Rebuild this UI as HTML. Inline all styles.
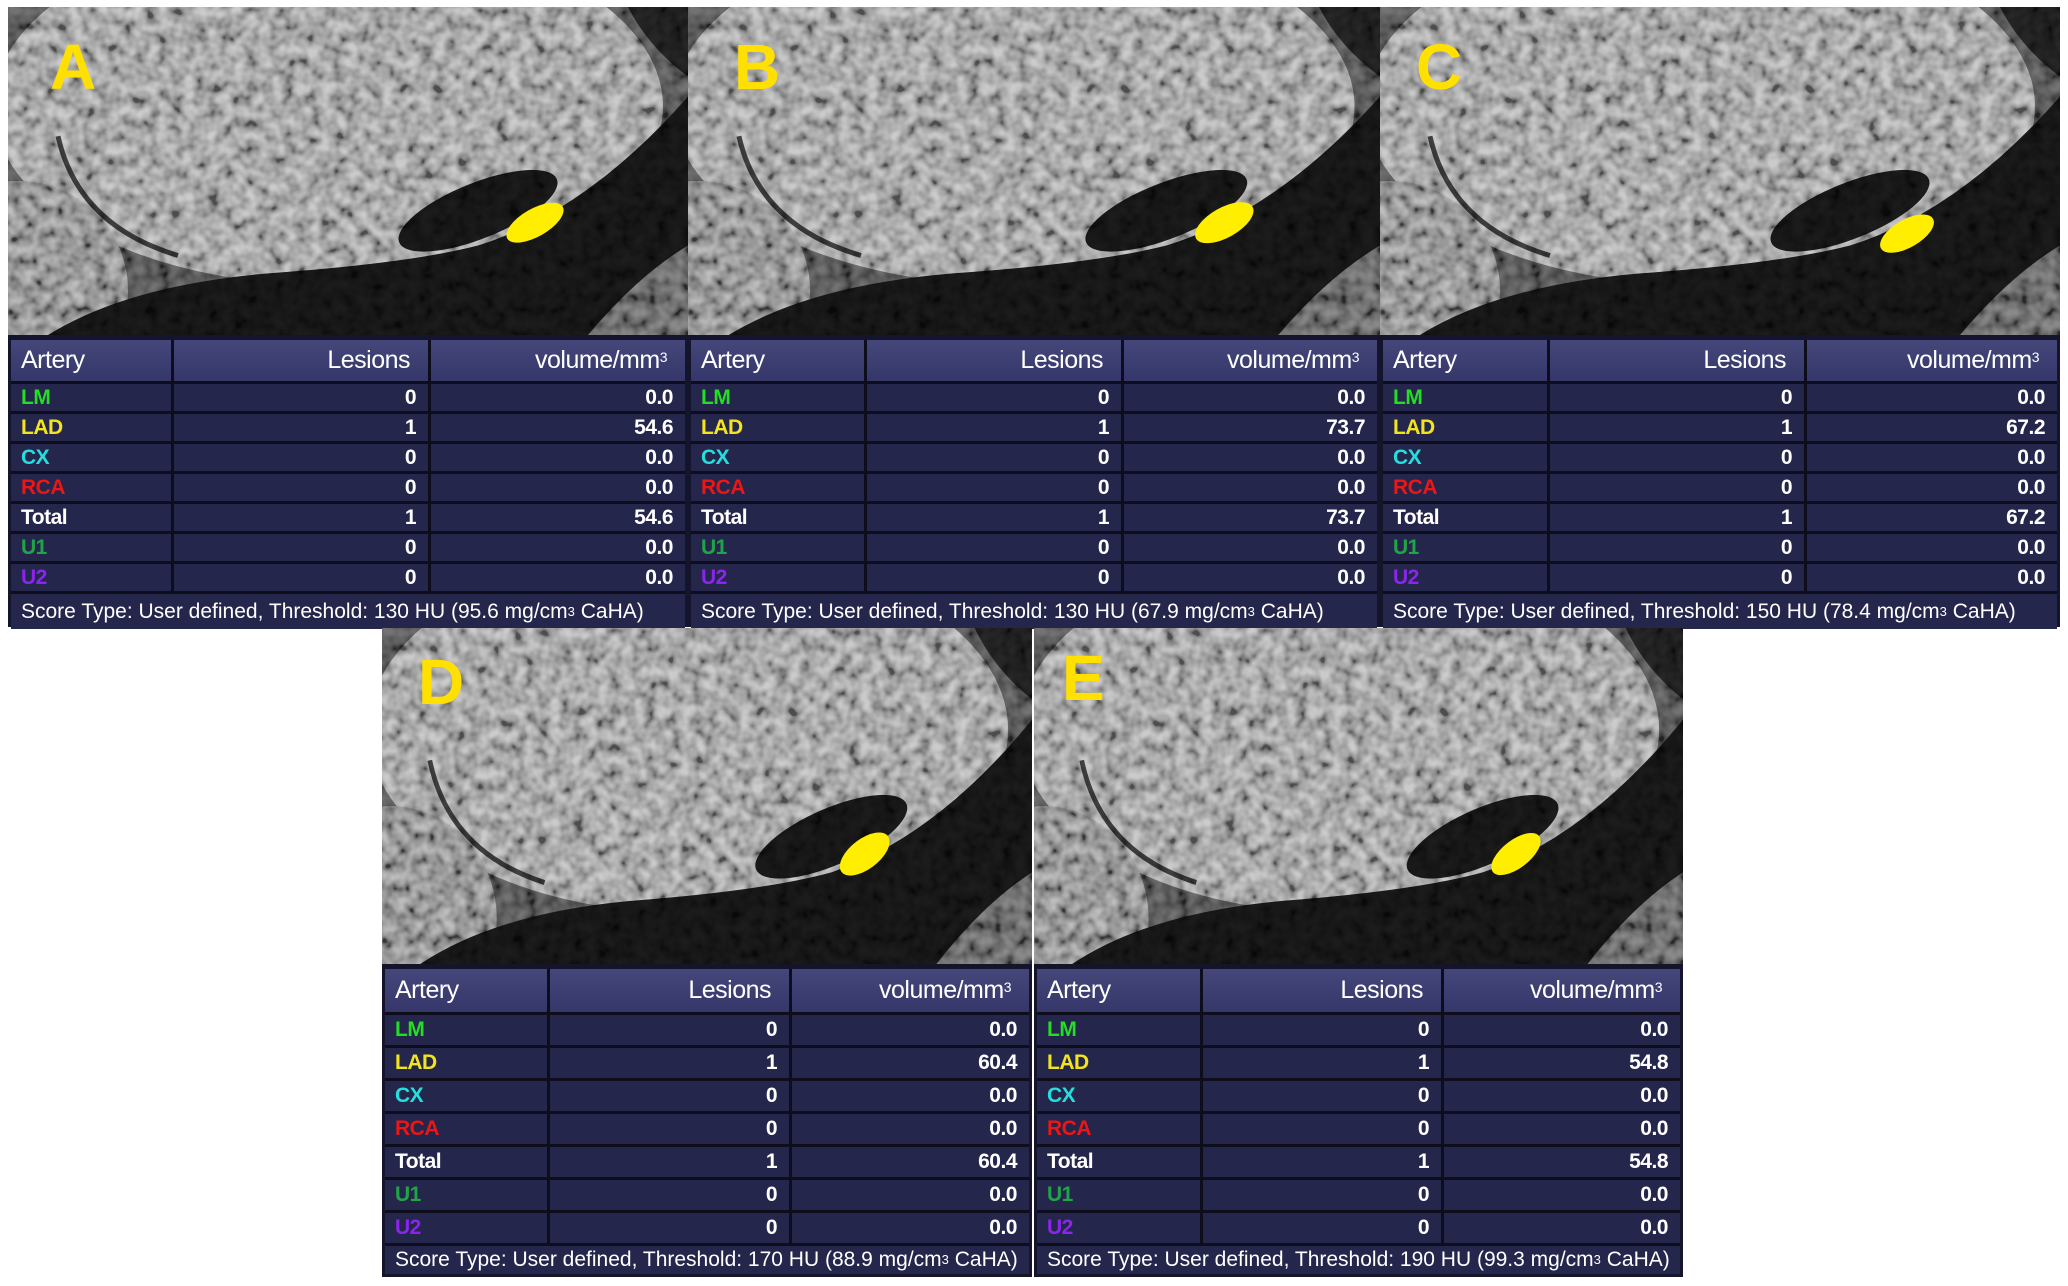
<!DOCTYPE html>
<html><head><meta charset="utf-8">
<style>
*{margin:0;padding:0;box-sizing:border-box}
body{width:2068px;height:1286px;background:#fff;position:relative;overflow:hidden;font-family:"Liberation Sans",Arial,sans-serif}
.p{position:absolute}
.img{position:absolute;left:0;top:0;overflow:hidden;background:#000}
.img svg{display:block;width:100%;height:100%}
.lab{position:absolute;color:#ffe000;font-weight:bold;font-size:64px;line-height:1}
.tb{position:absolute;left:0;background:#14152c;border:3px solid #14152c;border-top-width:5px}
.r{display:flex}
.c{background:#25264b;border-right:3px solid #0d0d1c;border-bottom:3px solid #0d0d1c;color:#fff;font-size:21px;font-weight:bold;display:flex;align-items:center;justify-content:flex-end;padding-right:12px;letter-spacing:-0.5px}
.c:first-child{justify-content:flex-start;padding-left:10px;padding-right:0}
.c:last-child{border-right:none}
.h .c{background:linear-gradient(#45477a,#35376a);font-weight:normal;font-size:25px;padding-right:18px}
.h .c:first-child{padding-left:10px}
.h sup{font-size:14px;position:relative;top:-4px}
.f{background:#25264b;color:#fff;font-size:21px;display:flex;align-items:center;padding-left:10px;white-space:pre}
.f sup{font-size:13px;vertical-align:8px;line-height:0}
.lm{color:#25dd25!important}.lad{color:#f2e41e!important}.cx{color:#25dede!important}.rca{color:#ee1515!important}.u1{color:#1fa548!important}.u2{color:#8a25ee!important}
</style></head><body>
<svg width="0" height="0" style="position:absolute">
<defs>
<filter id="nz" x="0" y="0" width="100%" height="100%">
<feTurbulence type="fractalNoise" baseFrequency="0.08" numOctaves="2" seed="5"/>
<feColorMatrix type="matrix" values="1.8 0 0 0 -0.4  1.8 0 0 0 -0.4  1.8 0 0 0 -0.4  0 0 0 0 0.55"/>
</filter>
<g id="scene">
<rect width="680" height="330" fill="#4a4a4a"/>
<ellipse cx="320" cy="100" rx="335" ry="180" fill="#8c8c8c"/>
<ellipse cx="10" cy="285" rx="110" ry="110" fill="#7a7a7a"/>
<path d="M40,330 Q120,280 260,268 Q400,258 470,240 Q580,205 680,90 L680,330Z" fill="#121212"/>
<ellipse cx="470" cy="205" rx="85" ry="28" transform="rotate(-22 470 205)" fill="#121212"/>
<path d="M580,330 Q630,270 680,240 L680,330Z" fill="#5a5a5a"/>
<path d="M50,130 Q70,220 170,250" fill="none" stroke="#2a2a2a" stroke-width="5"/>
<path d="M620,0 L680,0 L680,70 Q640,40 620,0Z" fill="#1a1a1a"/>
<rect width="680" height="330" filter="url(#nz)" style="mix-blend-mode:overlay"/>
</g>
</defs></svg>

<!-- A -->
<div class="p" style="left:8px;top:7px;width:680px;height:620px">
 <div class="img" style="width:680px;height:328px"><svg viewBox="0 0 680 330" preserveAspectRatio="none"><use href="#scene"/><ellipse cx="527" cy="217" rx="32" ry="14" transform="rotate(-30 527 217)" fill="#ffee00"/></svg></div>
 <div class="lab" style="left:42px;top:28px">A</div>
 <div class="tb" style="top:328px;width:680px;height:292px">
  <div class="r h" style="height:44px"><div class="c" style="width:163px">Artery</div><div class="c" style="width:257px">Lesions</div><div class="c" style="flex:1">volume/mm<sup>3</sup></div></div>
  <div class="r" style="height:30px"><div class="c lm" style="width:163px">LM</div><div class="c" style="width:257px">0</div><div class="c" style="flex:1">0.0</div></div>
  <div class="r" style="height:30px"><div class="c lad" style="width:163px">LAD</div><div class="c" style="width:257px">1</div><div class="c" style="flex:1">54.6</div></div>
  <div class="r" style="height:30px"><div class="c cx" style="width:163px">CX</div><div class="c" style="width:257px">0</div><div class="c" style="flex:1">0.0</div></div>
  <div class="r" style="height:30px"><div class="c rca" style="width:163px">RCA</div><div class="c" style="width:257px">0</div><div class="c" style="flex:1">0.0</div></div>
  <div class="r" style="height:30px"><div class="c" style="width:163px">Total</div><div class="c" style="width:257px">1</div><div class="c" style="flex:1">54.6</div></div>
  <div class="r" style="height:30px"><div class="c u1" style="width:163px">U1</div><div class="c" style="width:257px">0</div><div class="c" style="flex:1">0.0</div></div>
  <div class="r" style="height:30px"><div class="c u2" style="width:163px">U2</div><div class="c" style="width:257px">0</div><div class="c" style="flex:1">0.0</div></div>
  <div class="f" style="height:35px">Score Type: User defined, Threshold: 130 HU (95.6 mg/cm<sup>3</sup> CaHA)</div>
 </div>
</div>

<!-- B -->
<div class="p" style="left:688px;top:7px;width:692px;height:620px">
 <div class="img" style="width:692px;height:328px"><svg viewBox="0 0 680 330" preserveAspectRatio="none"><use href="#scene"/><ellipse cx="527" cy="217" rx="32" ry="15" transform="rotate(-30 527 217)" fill="#ffee00"/></svg></div>
 <div class="lab" style="left:46px;top:28px">B</div>
 <div class="tb" style="top:328px;width:692px;height:292px">
  <div class="r h" style="height:44px"><div class="c" style="width:176px">Artery</div><div class="c" style="width:257px">Lesions</div><div class="c" style="flex:1">volume/mm<sup>3</sup></div></div>
  <div class="r" style="height:30px"><div class="c lm" style="width:176px">LM</div><div class="c" style="width:257px">0</div><div class="c" style="flex:1">0.0</div></div>
  <div class="r" style="height:30px"><div class="c lad" style="width:176px">LAD</div><div class="c" style="width:257px">1</div><div class="c" style="flex:1">73.7</div></div>
  <div class="r" style="height:30px"><div class="c cx" style="width:176px">CX</div><div class="c" style="width:257px">0</div><div class="c" style="flex:1">0.0</div></div>
  <div class="r" style="height:30px"><div class="c rca" style="width:176px">RCA</div><div class="c" style="width:257px">0</div><div class="c" style="flex:1">0.0</div></div>
  <div class="r" style="height:30px"><div class="c" style="width:176px">Total</div><div class="c" style="width:257px">1</div><div class="c" style="flex:1">73.7</div></div>
  <div class="r" style="height:30px"><div class="c u1" style="width:176px">U1</div><div class="c" style="width:257px">0</div><div class="c" style="flex:1">0.0</div></div>
  <div class="r" style="height:30px"><div class="c u2" style="width:176px">U2</div><div class="c" style="width:257px">0</div><div class="c" style="flex:1">0.0</div></div>
  <div class="f" style="height:35px">Score Type: User defined, Threshold: 130 HU (67.9 mg/cm<sup>3</sup> CaHA)</div>
 </div>
</div>

<!-- C -->
<div class="p" style="left:1380px;top:7px;width:680px;height:620px">
 <div class="img" style="width:680px;height:328px"><svg viewBox="0 0 680 330" preserveAspectRatio="none"><use href="#scene"/><ellipse cx="527" cy="228" rx="30" ry="14" transform="rotate(-30 527 228)" fill="#ffee00"/></svg></div>
 <div class="lab" style="left:36px;top:28px">C</div>
 <div class="tb" style="top:328px;width:680px;height:292px">
  <div class="r h" style="height:44px"><div class="c" style="width:167px">Artery</div><div class="c" style="width:257px">Lesions</div><div class="c" style="flex:1">volume/mm<sup>3</sup></div></div>
  <div class="r" style="height:30px"><div class="c lm" style="width:167px">LM</div><div class="c" style="width:257px">0</div><div class="c" style="flex:1">0.0</div></div>
  <div class="r" style="height:30px"><div class="c lad" style="width:167px">LAD</div><div class="c" style="width:257px">1</div><div class="c" style="flex:1">67.2</div></div>
  <div class="r" style="height:30px"><div class="c cx" style="width:167px">CX</div><div class="c" style="width:257px">0</div><div class="c" style="flex:1">0.0</div></div>
  <div class="r" style="height:30px"><div class="c rca" style="width:167px">RCA</div><div class="c" style="width:257px">0</div><div class="c" style="flex:1">0.0</div></div>
  <div class="r" style="height:30px"><div class="c" style="width:167px">Total</div><div class="c" style="width:257px">1</div><div class="c" style="flex:1">67.2</div></div>
  <div class="r" style="height:30px"><div class="c u1" style="width:167px">U1</div><div class="c" style="width:257px">0</div><div class="c" style="flex:1">0.0</div></div>
  <div class="r" style="height:30px"><div class="c u2" style="width:167px">U2</div><div class="c" style="width:257px">0</div><div class="c" style="flex:1">0.0</div></div>
  <div class="f" style="height:35px">Score Type: User defined, Threshold: 150 HU (78.4 mg/cm<sup>3</sup> CaHA)</div>
 </div>
</div>

<!-- D -->
<div class="p" style="left:382px;top:628px;width:650px;height:649px">
 <div class="img" style="width:650px;height:336px"><svg viewBox="0 0 680 330" preserveAspectRatio="none"><use href="#scene"/><ellipse cx="505" cy="222" rx="30" ry="15" transform="rotate(-35 505 222)" fill="#ffee00"/></svg></div>
 <div class="lab" style="left:36px;top:22px">D</div>
 <div class="tb" style="top:336px;width:650px;height:313px">
  <div class="r h" style="height:46px"><div class="c" style="width:165px">Artery</div><div class="c" style="width:242px">Lesions</div><div class="c" style="flex:1">volume/mm<sup>3</sup></div></div>
  <div class="r" style="height:33px"><div class="c lm" style="width:165px">LM</div><div class="c" style="width:242px">0</div><div class="c" style="flex:1">0.0</div></div>
  <div class="r" style="height:33px"><div class="c lad" style="width:165px">LAD</div><div class="c" style="width:242px">1</div><div class="c" style="flex:1">60.4</div></div>
  <div class="r" style="height:33px"><div class="c cx" style="width:165px">CX</div><div class="c" style="width:242px">0</div><div class="c" style="flex:1">0.0</div></div>
  <div class="r" style="height:33px"><div class="c rca" style="width:165px">RCA</div><div class="c" style="width:242px">0</div><div class="c" style="flex:1">0.0</div></div>
  <div class="r" style="height:33px"><div class="c" style="width:165px">Total</div><div class="c" style="width:242px">1</div><div class="c" style="flex:1">60.4</div></div>
  <div class="r" style="height:33px"><div class="c u1" style="width:165px">U1</div><div class="c" style="width:242px">0</div><div class="c" style="flex:1">0.0</div></div>
  <div class="r" style="height:33px"><div class="c u2" style="width:165px">U2</div><div class="c" style="width:242px">0</div><div class="c" style="flex:1">0.0</div></div>
  <div class="f" style="height:28px">Score Type: User defined, Threshold: 170 HU (88.9 mg/cm<sup>3</sup> CaHA)</div>
 </div>
</div>

<!-- E -->
<div class="p" style="left:1034px;top:628px;width:649px;height:649px">
 <div class="img" style="width:649px;height:336px"><svg viewBox="0 0 680 330" preserveAspectRatio="none"><use href="#scene"/><ellipse cx="505" cy="222" rx="30" ry="14" transform="rotate(-35 505 222)" fill="#ffee00"/></svg></div>
 <div class="lab" style="left:28px;top:18px">E</div>
 <div class="tb" style="top:336px;width:649px;height:313px">
  <div class="r h" style="height:46px"><div class="c" style="width:166px">Artery</div><div class="c" style="width:241px">Lesions</div><div class="c" style="flex:1">volume/mm<sup>3</sup></div></div>
  <div class="r" style="height:33px"><div class="c lm" style="width:166px">LM</div><div class="c" style="width:241px">0</div><div class="c" style="flex:1">0.0</div></div>
  <div class="r" style="height:33px"><div class="c lad" style="width:166px">LAD</div><div class="c" style="width:241px">1</div><div class="c" style="flex:1">54.8</div></div>
  <div class="r" style="height:33px"><div class="c cx" style="width:166px">CX</div><div class="c" style="width:241px">0</div><div class="c" style="flex:1">0.0</div></div>
  <div class="r" style="height:33px"><div class="c rca" style="width:166px">RCA</div><div class="c" style="width:241px">0</div><div class="c" style="flex:1">0.0</div></div>
  <div class="r" style="height:33px"><div class="c" style="width:166px">Total</div><div class="c" style="width:241px">1</div><div class="c" style="flex:1">54.8</div></div>
  <div class="r" style="height:33px"><div class="c u1" style="width:166px">U1</div><div class="c" style="width:241px">0</div><div class="c" style="flex:1">0.0</div></div>
  <div class="r" style="height:33px"><div class="c u2" style="width:166px">U2</div><div class="c" style="width:241px">0</div><div class="c" style="flex:1">0.0</div></div>
  <div class="f" style="height:28px">Score Type: User defined, Threshold: 190 HU (99.3 mg/cm<sup>3</sup> CaHA)</div>
 </div>
</div>
</body></html>
